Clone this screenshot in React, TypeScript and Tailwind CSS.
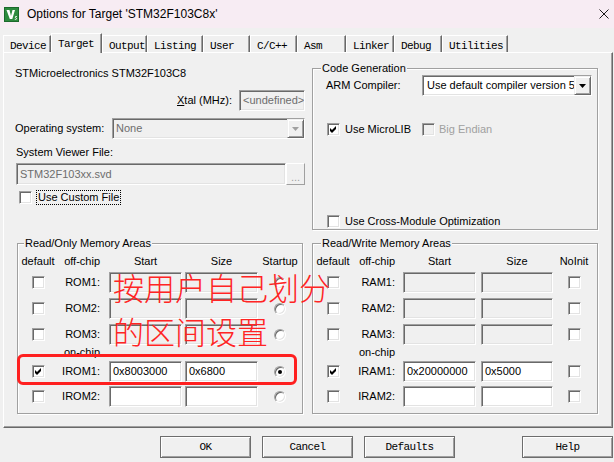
import React from "react";

const SUNKEN =
  "border border-t-[#a0a0a0] border-l-[#a0a0a0] border-b-white border-r-white shadow-[inset_1px_1px_0_#696969,inset_-1px_-1px_0_#e3e3e3]";
const GROUP =
  "border border-[#a0a0a0] shadow-[1px_1px_0_#ffffff,inset_1px_1px_0_#ffffff]";
const MONO = "font-['Liberation_Mono','Courier_New',monospace] text-[11px] tracking-[-0.6px]";

function Check({ checked = false, disabled = false }: { checked?: boolean; disabled?: boolean }) {
  return (
    <div
      className={`w-[13px] h-[13px] shrink-0 flex items-center justify-center ${SUNKEN} ${
        disabled ? "bg-[#f0f0f0]" : "bg-white"
      }`}
    >
      {checked && (
        <svg width="7" height="7" viewBox="0 0 7 7">
          <path d="M0 2 L2 4 L6 0 L6 3 L2 7 L0 5 Z" fill="#000" />
        </svg>
      )}
    </div>
  );
}

function Radio({ checked = false }: { checked?: boolean }) {
  return (
    <div
      className={`w-[12px] h-[12px] rounded-full bg-white flex items-center justify-center ${SUNKEN}`}
    >
      {checked && <div className="w-[4px] h-[4px] rounded-full bg-black" />}
    </div>
  );
}

function Field({
  className,
  value = "",
  disabled = false,
}: {
  className: string;
  value?: string;
  disabled?: boolean;
}) {
  return (
    <div
      className={`${className} shrink-0 flex items-center pl-[3px] whitespace-nowrap overflow-hidden ${SUNKEN} ${
        disabled ? "bg-[#f0f0f0] text-[#6d6d6d]" : "bg-white text-black"
      }`}
    >
      {value}
    </div>
  );
}

function Arrow({ disabled = false }: { disabled?: boolean }) {
  return (
    <div className="w-[17px] h-full shrink-0 bg-[#f0f0f0] border border-t-[#f0f0f0] border-l-[#f0f0f0] border-b-[#696969] border-r-[#696969] shadow-[inset_1px_1px_0_#ffffff,inset_-1px_-1px_0_#a0a0a0] flex items-center justify-center">
      <svg width="7" height="4" viewBox="0 0 7 4">
        <path d="M0 0 H7 L3.5 4 Z" fill={disabled ? "#a0a0a0" : "#000"} />
      </svg>
    </div>
  );
}

function Tab({ label, className, selected = false }: { label: string; className: string; selected?: boolean }) {
  return (
    <div
      className={`${className} shrink-0 flex items-start pl-[6px] bg-[#f0f0f0] border-l border-t border-l-white border-t-white border-r border-r-[#696969] shadow-[inset_-1px_0_0_#a0a0a0] ${MONO} text-black ${
        selected ? "h-[20px] pt-[2px] -mb-[1px] relative z-10" : "h-[17px] pt-[2px]"
      }`}
    >
      {label}
    </div>
  );
}

function Button({ label, className }: { label: string; className: string }) {
  return (
    <div
      className={`${className} h-[22px] shrink-0 flex items-center justify-center bg-[#f0f0f0] border border-[#6d6d6d] shadow-[inset_1px_1px_0_#ffffff,inset_-1px_-1px_0_#a0a0a0] ${MONO} text-black`}
    >
      {label}
    </div>
  );
}

type Row = { name: string; start?: string; size?: string; checked?: boolean; disabled?: boolean; radio?: boolean };

function MemGroup({ title, rw }: { title: string; rw: boolean }) {
  const pre = rw ? "RAM" : "ROM";
  const off: Row[] = [
    { name: `${pre}1:`, disabled: true },
    { name: `${pre}2:`, disabled: true },
    { name: `${pre}3:`, disabled: true },
  ];
  const on: Row[] = rw
    ? [
        { name: "IRAM1:", start: "0x20000000", size: "0x5000", checked: true },
        { name: "IRAM2:" },
      ]
    : [
        { name: "IROM1:", start: "0x8003000", size: "0x6800", checked: true, radio: true },
        { name: "IROM2:" },
      ];
  const colA = "w-[40px]";
  const colB = rw ? "w-[50px] pr-[8px]" : "w-[51px] pr-[9px]";
  const gap = rw ? "w-[5px]" : "w-[3px]";
  const colE = rw ? "w-[42px]" : "w-[44px]";
  const sizeW = rw ? "w-[72px] h-[21px]" : "w-[73px] h-[21px]";
  const last = (r: Row) =>
    rw ? <Check /> : <Radio checked={!!r.radio} />;

  const renderRow = (r: Row, mt: string) => (
    <div key={r.name} className={`flex items-center h-[21px] ${mt}`}>
      <div className={`${colA} flex justify-center shrink-0`}>
        <Check checked={!!r.checked} />
      </div>
      <div className={`${colB} text-right shrink-0`}>{r.name}</div>
      <Field className="w-[73px] h-[21px]" value={r.start} disabled={r.disabled} />
      <div className={`${gap} shrink-0`} />
      <Field className={sizeW} value={r.size} disabled={r.disabled} />
      <div className={`${colE} flex justify-center shrink-0`}>{last(r)}</div>
    </div>
  );

  return (
    <div className={`w-[286px] h-[171px] ${GROUP} flex flex-col ${rw ? "ml-[9px]" : "ml-[2px]"}`}>
      <div
        className={`-mt-[7px] ${rw ? "ml-[8px]" : "ml-[6px]"} px-[1px] bg-[#f0f0f0] w-fit h-[13px] leading-[13px]`}
      >
        {title}
      </div>
      <div className="mt-[5px] flex h-[13px] leading-[13px]">
        <div className={`${colA} text-center shrink-0`}>default</div>
        <div className={`${colB} text-right shrink-0`}>off-chip</div>
        <div className="w-[73px] text-center shrink-0">Start</div>
        <div className={`${gap} shrink-0`} />
        <div className={`${rw ? "w-[72px]" : "w-[73px]"} text-center shrink-0`}>Size</div>
        <div className={`${colE} text-center shrink-0 whitespace-nowrap`}>{rw ? "NoInit" : "Startup"}</div>
      </div>
      {renderRow(off[0], "mt-[4px]")}
      {renderRow(off[1], "mt-[5px]")}
      {renderRow(off[2], "mt-[5px]")}
      <div className="mt-[1px] flex h-[13px] leading-[13px]">
        <div className={`${colA} shrink-0`} />
        <div className={`${colB} text-right shrink-0`}>on-chip</div>
      </div>
      {renderRow(on[0], "mt-[2px]")}
      {renderRow(on[1], "mt-[4px]")}
    </div>
  );
}

export default function App() {
  return (
    <div className="relative w-[614px] h-[462px] bg-[#f0f0f0] overflow-hidden font-['Liberation_Sans',Arial,sans-serif] text-[11px] text-black">
      {/* Title bar */}
      <div className="h-[28px] bg-[#f7ecf3] flex items-center">
        <svg className="ml-[4px] shrink-0" width="15" height="15" viewBox="0 0 15 15">
          <rect x="0" y="0" width="15" height="15" fill="#2d8a3e" />
          <rect x="0.5" y="0.5" width="14" height="14" fill="none" stroke="#1b6a2b" />
          <path d="M2.5 3 L5.5 3 L7 9 L8.5 3 L11 3 L8.3 12 L5.8 12 Z" fill="#ffffff" />
          <path d="M12.8 9.5 C11.2 9 10.6 10.4 11.9 10.9 C13.2 11.4 12.6 12.8 10.8 12.3" stroke="#ffffff" strokeWidth="1" fill="none" />
        </svg>
        <span className="ml-[8px] text-[12px] leading-[16px] whitespace-nowrap">
          Options for Target 'STM32F103C8x'
        </span>
        <svg className="ml-auto mr-[5px]" width="10" height="10" viewBox="0 0 10 10">
          <path d="M0.5 0.5 L9.5 9.5 M9.5 0.5 L0.5 9.5" stroke="#1a1a1a" strokeWidth="1" />
        </svg>
      </div>

      {/* Tabs */}
      <div className="h-[24px] flex items-end pl-[3px]">
        <Tab label="Device" className="w-[48px]" />
        <Tab label="Target" className="w-[51px]" selected />
        <Tab label="Output" className="w-[45px]" />
        <Tab label="Listing" className="w-[56px]" />
        <Tab label="User" className="w-[47px]" />
        <Tab label="C/C++" className="w-[47px]" />
        <Tab label="Asm" className="w-[49px]" />
        <Tab label="Linker" className="w-[48px]" />
        <Tab label="Debug" className="w-[48px]" />
        <Tab label="Utilities" className="w-[66px]" />
      </div>

      {/* Panel */}
      <div className="ml-[3px] w-[610px] h-[376px] border border-white border-r-[#696969] border-b-[#696969] shadow-[inset_-1px_-1px_0_#a0a0a0] pl-[11px]">
        <div className="flex h-[177px]">
          {/* Left column */}
          <div className="w-[290px] shrink-0 flex flex-col">
            <div className="mt-[14px] h-[13px] leading-[13px]">STMicroelectronics STM32F103C8</div>
            <div className="mt-[10px] flex items-center justify-end h-[21px]">
              <span>
                <span className="underline">X</span>tal (MHz):
              </span>
              <Field className="ml-[7px] w-[66px] h-[21px]" value="<undefined>" disabled />
            </div>
            <div className="mt-[7px] flex items-center h-[21px]">
              <div className="w-[97px] shrink-0">Operating system:</div>
              <div className={`w-[193px] h-[21px] flex bg-[#f0f0f0] text-[#6d6d6d] ${SUNKEN}`}>
                <div className="flex-1 pl-[3px] flex items-center">None</div>
                <Arrow disabled />
              </div>
            </div>
            <div className="mt-[7px] ml-[1px] h-[13px] leading-[13px]">System Viewer File:</div>
            <div className="mt-[4px] ml-[1px] flex h-[22px]">
              <Field className="w-[270px] h-[22px]" value="STM32F103xx.svd" disabled />
              <div className="w-[19px] h-[22px] shrink-0 bg-[#f0f0f0] border border-t-white border-l-white border-b-[#a0a0a0] border-r-[#a0a0a0] flex items-end justify-center pb-[3px] text-[#a0a0a0] leading-[8px]">
                ...
              </div>
            </div>
            <div className="mt-[6px] ml-[4px] flex items-center h-[13px]">
              <Check />
              <span className="ml-[4px] px-[1px] border border-dotted border-black leading-[13px]">Use Custom File</span>
            </div>
          </div>

          {/* Code Generation */}
          <div className={`ml-[7px] mt-[15px] w-[286px] h-[162px] ${GROUP} flex flex-col`}>
            <div className="-mt-[7px] ml-[8px] px-[1px] bg-[#f0f0f0] w-fit h-[13px] leading-[13px]">
              Code Generation
            </div>
            <div className="flex items-center ml-[13px] h-[21px]">
              <div className="w-[96px] shrink-0">ARM Compiler:</div>
              <div className={`w-[170px] h-[21px] flex bg-white ${SUNKEN}`}>
                <div className="flex-1 pl-[4px] flex items-center whitespace-nowrap overflow-hidden">
                  Use default compiler version 5
                </div>
                <Arrow />
              </div>
            </div>
            <div className="mt-[27px] ml-[14px] flex items-center h-[13px]">
              <div className="w-[95px] flex items-center shrink-0">
                <Check checked />
                <span className="ml-[5px]">Use MicroLIB</span>
              </div>
              <Check disabled />
              <span className="ml-[4px] text-[#a0a0a0]">Big Endian</span>
            </div>
            <div className="mt-[79px] ml-[14px] flex items-center h-[13px]">
              <Check />
              <span className="ml-[5px]">Use Cross-Module Optimization</span>
            </div>
          </div>
        </div>

        <div className="flex mt-[13px]">
          <MemGroup title="Read/Only Memory Areas" rw={false} />
          <MemGroup title="Read/Write Memory Areas" rw />
        </div>
      </div>

      {/* Buttons */}
      <div className="flex mt-[8px]">
        <Button label="OK" className="ml-[160px] w-[91px]" />
        <Button label="Cancel" className="ml-[11px] w-[91px]" />
        <Button label="Defaults" className="ml-[11px] w-[91px]" />
        <Button label="Help" className="ml-[67px] w-[91px]" />
      </div>

      {/* Annotation overlay */}
      <div className="absolute left-[113px] top-[265px] text-[31px] leading-[44px] font-light text-[#ff2424] font-['Noto_Sans_CJK_SC','Noto_Sans',sans-serif] whitespace-nowrap pointer-events-none">
        <div>按用户自己划分</div>
        <div>的区间设置</div>
      </div>
      <div className="absolute left-[17px] top-[354px] w-[280px] h-[31px] border-[3px] border-[#ff2020] rounded-[6px] pointer-events-none" />
    </div>
  );
}
